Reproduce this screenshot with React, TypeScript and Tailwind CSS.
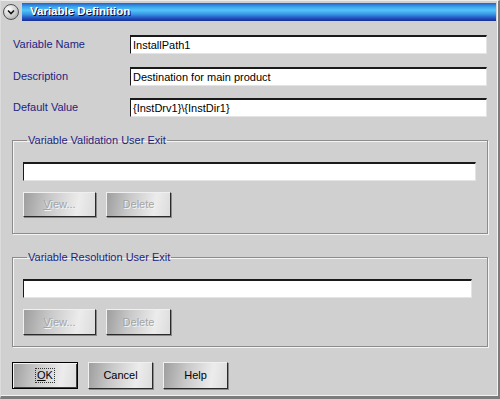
import React from "react";

const font = { fontFamily: "'Liberation Sans', Arial, sans-serif" };

function Field({ value, className = "" }: { value?: string; className?: string }) {
  return (
    <div
      className={`h-[19px] bg-white border-t-2 border-l border-r border-b border-t-[#1a1a1a] border-l-[#1a1a1a] border-r-[#e4e4e4] border-b-[#e4e4e4] flex items-center pl-[2px] text-[11px] text-black ${className}`}
    >
      {value}
    </div>
  );
}

function Btn({
  children,
  w,
  h = 25,
  disabled = false,
  def = false,
}: {
  children: React.ReactNode;
  w: string;
  h?: number;
  disabled?: boolean;
  def?: boolean;
}) {
  return (
    <div
      className={`${w} ${h === 27 ? "h-[27px]" : h === 26 ? "h-[26px]" : "h-[25px]"} flex items-center justify-center text-[11px] bg-[linear-gradient(100deg,#9e9e9e_0%,#c8c8c8_35%,#ececec_75%,#dcdcdc_100%)] ${
        def
          ? "border border-black shadow-[inset_1px_1px_0_#f4f4f4,inset_-1px_-1px_0_#404040]"
          : "border border-t-[#f0f0f0] border-l-[#f0f0f0] border-r-[#2a2a2a] border-b-[#2a2a2a] shadow-[1px_1px_0_#8a8a8a]"
      } ${disabled ? "text-[#a4a4a4] [text-shadow:1px_1px_0_#f4f4f4]" : "text-black"}`}
    >
      {children}
    </div>
  );
}

function Group({
  title,
  children,
  className = "",
}: {
  title: string;
  children: React.ReactNode;
  className?: string;
}) {
  return (
    <fieldset
      className={`ml-[11px] w-[476px] border border-[#8c8c8c] shadow-[1px_1px_0_#f4f4f4,inset_1px_1px_0_#f4f4f4] ${className}`}
    >
      <legend className="ml-[4px] px-[1px] text-[11px] leading-[14px] text-[#1e1e80]">{title}</legend>
      {children}
    </fieldset>
  );
}

export default function App() {
  return (
    <div
      style={font}
      className="w-[500px] h-[399px] bg-[#d0d0d0] border-t border-l border-t-[#ececec] border-l-[#dcdcdc] border-r-2 border-r-[#7c7c7c] border-b-[3px] border-b-[#7c7c7c] shadow-[inset_-1px_-1px_0_#f2f2f2] flex flex-col overflow-hidden"
    >
      {/* title bar */}
      <div className="flex items-start pt-[2px] pl-[2px]">
        <div className="w-[16px] h-[16px] mt-[1px] rounded-full border border-[#505050] bg-[radial-gradient(circle_at_35%_30%,#ffffff,#c8c8c8_60%,#909090)] flex items-center justify-center">
          <svg width="10" height="10" viewBox="0 0 10 10">
            <path d="M2 3.5 L5 6.5 L8 3.5" fill="none" stroke="#111" strokeWidth="1.6" />
          </svg>
        </div>
        <div className="ml-[3px] w-[474px] h-[18px] bg-[linear-gradient(to_bottom,#2a5cc8_0%,#3aa8ee_22%,#52c4f8_40%,#3a98e6_62%,#2458c4_82%,#1a2c98_100%)] flex items-center pl-[8px]">
          <span className="text-white font-bold text-[11.5px] [text-shadow:1px_1px_0_#0a0a40]">Variable Definition</span>
        </div>
      </div>

      {/* fields */}
      <div className="mt-[14px] flex items-center">
        <div className="w-[129px] pl-[12px] text-[11px] text-[#1e1e80]">Variable Name</div>
        <Field value="InstallPath1" className="w-[357px]" />
      </div>
      <div className="mt-[13px] flex items-center">
        <div className="w-[129px] pl-[12px] text-[11px] text-[#1e1e80]">Description</div>
        <Field value="Destination for main product" className="w-[357px]" />
      </div>
      <div className="mt-[12px] flex items-center">
        <div className="w-[129px] pl-[12px] text-[11px] text-[#1e1e80]">Default Value</div>
        <Field value="{InstDrv1}\{InstDir1}" className="w-[357px]" />
      </div>

      <Group title="Variable Validation User Exit" className="mt-[16px] pl-[10px] pr-[10px] pt-[15px] pb-[16px]">
        <Field className="w-[453px]" />
        <div className="mt-[11px] flex gap-[10px]">
          <Btn w="w-[73px]" disabled>
            <span>
              <span className="underline">V</span>iew...
            </span>
          </Btn>
          <Btn w="w-[65px]" disabled>
            Delete
          </Btn>
        </div>
      </Group>

      <Group title="Variable Resolution User Exit" className="mt-[16px] pl-[10px] pr-[15px] pt-[15px] pb-[11px]">
        <Field className="w-[449px]" />
        <div className="mt-[11px] flex gap-[10px]">
          <Btn w="w-[73px]" h={26} disabled>
            <span>
              <span className="underline">V</span>iew...
            </span>
          </Btn>
          <Btn w="w-[65px]" h={26} disabled>
            Delete
          </Btn>
        </div>
      </Group>

      <div className="mt-[15px] ml-[11px] flex gap-[10px]">
        <Btn w="w-[66px]" h={27} def>
          <span className="outline outline-1 outline-dotted outline-[#333] px-[1px] leading-[13px]">
            <span className="underline">O</span>K
          </span>
        </Btn>
        <Btn w="w-[65px]" h={27}>
          Cancel
        </Btn>
        <Btn w="w-[65px]" h={27}>
          Help
        </Btn>
      </div>
    </div>
  );
}
